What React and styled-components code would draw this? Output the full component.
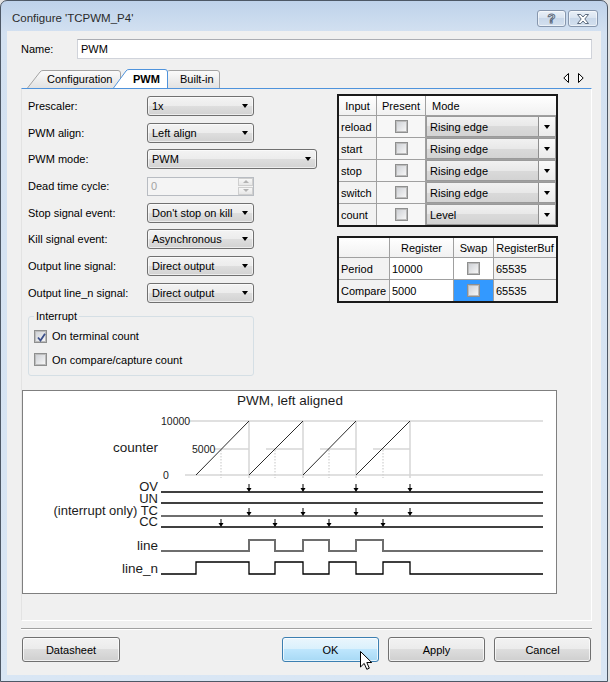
import React from 'react';
import styled, { createGlobalStyle } from 'styled-components';

const GlobalStyle = createGlobalStyle`
  html, body { margin: 0; padding: 0; background: #e2e2e2; }
  body { font-family: "Liberation Sans", Arial, sans-serif; font-size: 11px; color: #000; }
  * { box-sizing: border-box; }
`;

const Window = styled.div`
  width: 608px;
  height: 682px;
  border: 1px solid #4d5866;
  border-radius: 7px 7px 0 0;
  background: linear-gradient(#bed2ea, #d3e1f1 32px, #d9e6f4);
  display: flex;
  flex-direction: column;
`;

const TitleBar = styled.div`
  height: 30px;
  display: flex;
  align-items: flex-start;
  padding: 9px 9px 0 11px;
`;

const Title = styled.div`
  font-size: 11.5px;
  line-height: 17px;
  color: #2b2b2b;
`;

const CapButtons = styled.div`
  margin-left: auto;
  display: flex;
  gap: 2px;
`;

const CapButton = styled.div`
  width: ${p => p.$w}px;
  height: 17px;
  border: 1px solid #8797ae;
  border-radius: 3px;
  background: linear-gradient(#e9f0f8, #d8e3f0 50%, #c9d8ea 50%, #d4e0ee);
  box-shadow: inset 0 0 0 1px rgba(255, 255, 255, 0.55);
  display: flex;
  align-items: center;
  justify-content: center;
`;

const HelpGlyph = styled.span`
  font: bold 13px "Liberation Sans", Arial, sans-serif;
  color: #fff;
  -webkit-text-stroke: 1px #5d6b7e;
  line-height: 13px;
`;

const Client = styled.div`
  flex: 1;
  margin: 0 6px 6px;
  background: #f0f0f0;
  padding: 8px 9px 0 14px;
  display: flex;
  flex-direction: column;
`;

const NameRow = styled.div`
  display: flex;
  align-items: center;
  height: 20px;
`;

const NameLabel = styled.div`
  width: 56px;
`;

const TextInput = styled.div`
  flex: 1;
  height: 20px;
  background: #fff;
  border: 1px solid #d0d3da;
  border-top-color: #abadb3;
  padding-left: 3px;
  display: flex;
  align-items: center;
`;

const TabStrip = styled.div`
  margin-top: 10px;
  height: 19px;
  display: flex;
  align-items: flex-end;
  padding-left: 6px;
`;

const TabItem = styled.div`
  position: relative;
  z-index: ${p => p.$z};
  width: ${p => p.$w}px;
  height: ${p => (p.$active ? 19 : 18)}px;
  margin-left: ${p => p.$ml || 0}px;
  padding-left: ${p => p.$pl}px;
  display: flex;
  align-items: center;
  font-weight: ${p => (p.$active ? 700 : 400)};
  svg {
    position: absolute;
    left: 0;
    top: 0;
    z-index: -1;
  }
`;

const TabScroll = styled.div`
  margin-left: auto;
  margin-right: 8px;
  align-self: center;
  margin-bottom: 2px;
  display: flex;
  gap: 9px;
`;

const Panel = styled.div`
  height: 533px;
  border: 1px solid #fff;
  border-top-color: #4f93dc;
  border-left-color: #e3e3e3;
  overflow: hidden;
`;

const TopSection = styled.div`
  display: grid;
  grid-template-columns: 309px 221px;
  padding-left: 6px;
`;

const LeftColumn = styled.div`
  display: flex;
  flex-direction: column;
`;

const Form = styled.div`
  margin-top: 7px;
  display: grid;
  grid-template-columns: 119px auto;
  grid-auto-rows: 20px;
  row-gap: 6.7px;
  align-items: center;
`;

const Select = styled.div`
  width: ${p => p.$w || 107}px;
  height: 20px;
  border: 1px solid #707070;
  border-radius: 3px;
  background: linear-gradient(#f3f3f3, #ececec 50%, #dedede 50%, #d2d2d2);
  box-shadow: inset 0 0 0 1px rgba(255, 255, 255, 0.6);
  display: flex;
  align-items: center;
  padding-left: 4px;
`;

const Caret = styled.span`
  margin-left: ${p => (p.$bare ? 0 : 'auto')};
  margin-right: ${p => (p.$bare ? 0 : 5)}px;
  width: 0;
  height: 0;
  border-left: 3.5px solid transparent;
  border-right: 3.5px solid transparent;
  border-top: 4px solid #000;
`;

const Spin = styled.div`
  width: 107px;
  height: 19px;
  border: 1px solid #b8bcc2;
  background: #f4f4f4;
  display: flex;
  align-items: center;
  padding-left: 3px;
  color: #a3a3a3;
`;

const SpinButtons = styled.div`
  margin-left: auto;
  width: 15px;
  height: 17px;
  display: flex;
  flex-direction: column;
  gap: 1px;
`;

const SpinPart = styled.div`
  flex: 1;
  border: 1px solid #cfcfcf;
  background: linear-gradient(#f7f7f7, #e7e7e7);
  display: flex;
  align-items: center;
  justify-content: center;
  &::after {
    content: '';
    border-left: 3px solid transparent;
    border-right: 3px solid transparent;
    ${p => (p.$up ? 'border-bottom: 3px solid #b3b3b3;' : 'border-top: 3px solid #b3b3b3;')}
  }
`;

const Group = styled.fieldset`
  margin: 7px 0 0;
  width: 226px;
  border: 1px solid #d5dfe5;
  border-radius: 3px;
  padding: 6px 6px 8px 5px;
  display: flex;
  flex-direction: column;
  gap: 8.5px;
  legend {
    padding: 0 2px;
    line-height: 13px;
    margin-left: 0;
  }
`;

const CheckRow = styled.label`
  display: flex;
  align-items: center;
  gap: 5px;
  height: 15px;
`;

const Box = styled.span`
  width: 13px;
  height: 13px;
  flex: none;
  border: 1px solid #8e8f8f;
  background: #fff;
  display: inline-flex;
  align-items: center;
  justify-content: center;
  position: relative;
  &::before {
    content: '';
    width: 9px;
    height: 9px;
    border: 1px solid #bcbcbc;
    background: linear-gradient(135deg, #cfd2d7, #f6f6f6);
  }
  svg {
    position: absolute;
    left: 1px;
    top: 1px;
  }
`;

const RightColumn = styled.div`
  margin-top: 5px;
  display: flex;
  flex-direction: column;
  gap: 9px;
`;

const Grid = styled.div`
  width: 221px;
  display: grid;
  grid-template-columns: ${p => p.$cols};
  grid-template-rows: 19px;
  grid-auto-rows: 21px;
  gap: 1px;
  background: #a0a0a0;
  border: 2px solid #1a1a1a;
`;

const HeadCell = styled.div`
  background: linear-gradient(#ffffff, #f1f1f1);
  display: flex;
  align-items: center;
  justify-content: ${p => (p.$left ? 'flex-start' : 'center')};
  padding-left: ${p => (p.$left ? 6 : 0)}px;
  white-space: nowrap;
  overflow: hidden;
`;

const Cell = styled.div`
  background: ${p => p.$bg || '#fff'};
  display: flex;
  align-items: center;
  justify-content: ${p => (p.$center ? 'center' : 'flex-start')};
  padding-left: ${p => (p.$center ? 0 : 2)}px;
  white-space: nowrap;
  overflow: hidden;
`;

const ModeCell = styled.div`
  background: #fff;
  display: flex;
  border: 1px solid #9a9a9a;
`;

const ModeText = styled.div`
  flex: 1;
  display: flex;
  align-items: center;
  padding-left: 3px;
  background: linear-gradient(#f1f1f1, #e8e8e8 50%, #dadada 50%, #d3d3d3);
`;

const ModeDrop = styled.div`
  width: 17px;
  border-left: 1px solid #8e8e8e;
  background: linear-gradient(#fafafa, #ebebeb);
  display: flex;
  align-items: center;
  justify-content: center;
`;

const ChartBox = styled.div`
  margin-top: 14px;
  width: 535px;
  height: 204px;
  border: 1px solid #7f7f7f;
  background: #fff;
  svg {
    display: block;
  }
  text {
    font-family: "Liberation Sans", Arial, sans-serif;
    fill: #1b1b1b;
  }
`;

const Separator = styled.div`
  margin-top: 7px;
  border-top: 1px solid #a0a0a0;
  border-bottom: 1px solid #fff;
`;

const ButtonRow = styled.div`
  margin-top: 7px;
  display: flex;
  gap: 9px;
  padding: 0 1px;
`;

const Button = styled.div`
  position: relative;
  width: ${p => p.$w || 97}px;
  height: 25px;
  margin-left: ${p => (p.$push ? 'auto' : '0')};
  border: 1px solid ${p => (p.$hot ? '#3c7fb1' : '#707070')};
  border-radius: 3px;
  background: ${p =>
    p.$hot
      ? 'linear-gradient(#eaf6fd, #d9f0fc 50%, #bee6fd 50%, #a7d9f5)'
      : 'linear-gradient(#f2f2f2, #ebebeb 50%, #dddddd 50%, #cfcfcf)'};
  box-shadow: inset 0 0 0 1px rgba(255, 255, 255, 0.7);
  display: flex;
  align-items: center;
  justify-content: center;
`;

const Cursor = styled.svg`
  position: absolute;
  left: 77px;
  top: 13px;
`;

const TabShape = ({ w, h, active, id }) => (
  <svg width={w} height={h}>
    <defs>
      <linearGradient id={id} x1="0" y1="0" x2="0" y2="1">
        <stop offset="0" stopColor={active ? '#ffffff' : '#fbfbfb'} />
        <stop offset="1" stopColor={active ? '#ffffff' : '#e2e2e2'} />
      </linearGradient>
    </defs>
    <path
      d={`M0.5 ${h} L13 2 Q14 0.5 16 0.5 H${w - 3} Q${w - 0.5} 0.5 ${w - 0.5} 3 V${h}`}
      fill={`url(#${id})`}
      stroke={active ? '#4f93dc' : '#a3a3a3'}
    />
  </svg>
);

const Tab = ({ label, w, pl, ml, z, active, id }) => {
  const h = active ? 19 : 18;
  return (
    <TabItem $w={w} $pl={pl} $ml={ml} $z={z} $active={active}>
      <TabShape w={w} h={h} active={active} id={id} />
      {label}
    </TabItem>
  );
};

const CheckBox = ({ checked }) => (
  <Box>
    {checked && (
      <svg width="11" height="11" viewBox="0 0 11 11">
        <path d="M2 5.5 L4.5 8.5 L9 1.8" fill="none" stroke="#3b4f8a" strokeWidth="1.8" />
      </svg>
    )}
  </Box>
);

const formRows = [
  ['Prescaler:', '1x'],
  ['PWM align:', 'Left align'],
  ['PWM mode:', 'PWM', 170],
  ['Dead time cycle:', null],
  ['Stop signal event:', "Don't stop on kill"],
  ['Kill signal event:', 'Asynchronous'],
  ['Output line signal:', 'Direct output'],
  ['Output line_n signal:', 'Direct output'],
];

const inputs = [
  ['reload', 'Rising edge'],
  ['start', 'Rising edge'],
  ['stop', 'Rising edge'],
  ['switch', 'Rising edge'],
  ['count', 'Level'],
];

const Chart = () => {
  const P = [249, 303, 356, 410];
  const C = [221, 275, 329, 383];
  const S = [196, 249, 303, 356];
  const M = [214, 266, 320, 373];
  const arrow = (x, y, k) => (
    <g key={k}>
      <line x1={x} y1={y - 8} x2={x} y2={y - 3} stroke="#000" strokeWidth="1" />
      <path d={`M${x - 2.5} ${y - 4}H${x + 2.5}L${x} ${y}Z`} fill="#000" />
    </g>
  );
  return (
    <svg width="533" height="202" viewBox="23 392 533 202">
      <text x="290" y="406" fontSize="13.5" textAnchor="middle">PWM, left aligned</text>
      <g stroke="#d6d6d6" strokeWidth="1.5" fill="none">
        <line x1="189" y1="422" x2="543" y2="422" />
        <line x1="185" y1="476" x2="543" y2="476" />
        {M.map((m, i) => <line key={i} x1={m} y1="450" x2={P[i]} y2="450" />)}
        {P.map((p, i) => <line key={i} x1={p} y1="422" x2={p} y2="479" />)}
      </g>
      <g stroke="#cfcfcf" strokeWidth="1.2" strokeDasharray="1.5 1.5">
        {C.map((c, i) => <line key={i} x1={c} y1="451" x2={c} y2="479" />)}
      </g>
      <g stroke="#2a2a2a" strokeWidth="1">
        {S.map((s, i) => <line key={i} x1={s} y1="476" x2={P[i]} y2="422" />)}
      </g>
      <text x="161" y="426" fontSize="10.5">10000</text>
      <text x="192" y="454" fontSize="10.5">5000</text>
      <text x="163" y="480" fontSize="10.5">0</text>
      <text x="158" y="453" fontSize="13.5" textAnchor="end">counter</text>

      <g fontSize="13" textAnchor="end">
        <text x="158" y="492">OV</text>
        <text x="158" y="503.5">UN</text>
        <text x="158" y="516">(interrupt only) TC</text>
        <text x="158" y="527">CC</text>
      </g>
      <g fontSize="13.5" textAnchor="end">
        <text x="158" y="551">line</text>
        <text x="158" y="574">line_n</text>
      </g>
      <g strokeWidth="1.3" fill="none">
        <line x1="161" y1="493" x2="543" y2="493" stroke="#000" />
        <line x1="161" y1="504" x2="543" y2="504" stroke="#000" />
        <line x1="161" y1="517" x2="543" y2="517" stroke="#6e6e6e" strokeWidth="2" />
        <line x1="161" y1="528" x2="543" y2="528" stroke="#000" />
        <path d="M161 552H249V541H275V552H303V541H329V552H356V541H383V552H543" stroke="#6e6e6e" strokeWidth="2" />
        <path d="M161 575H196V563H249V575H275V563H303V575H329V563H356V575H383V563H410V575H543" stroke="#000" />
      </g>
      {P.map((p, i) => arrow(p, 493, 'o' + i))}
      {P.map((p, i) => arrow(p, 517, 't' + i))}
      {C.map((c, i) => arrow(c, 528, 'c' + i))}
    </svg>
  );
};

export default function App() {
  return (
    <>
      <GlobalStyle />
      <Window>
        <TitleBar>
          <Title>Configure 'TCPWM_P4'</Title>
          <CapButtons>
            <CapButton $w={29}>
              <HelpGlyph>?</HelpGlyph>
            </CapButton>
            <CapButton $w={30}>
              <svg width="12" height="10" viewBox="0 0 12 10">
                <path
                  d="M0.5 0.5H3.8L6 3L8.2 0.5H11.5L7.8 5L11.5 9.5H8.2L6 7L3.8 9.5H0.5L4.2 5Z"
                  fill="#fff"
                  stroke="#5d6b7e"
                />
              </svg>
            </CapButton>
          </CapButtons>
        </TitleBar>
        <Client>
          <NameRow>
            <NameLabel>Name:</NameLabel>
            <TextInput>PWM</TextInput>
          </NameRow>
          <TabStrip>
            <Tab label="Configuration" w={94} pl={20} z={1} id="t1" />
            <Tab label="PWM" w={55} pl={20} ml={-8} z={3} active id="t2" />
            <Tab label="Built-in" w={66} pl={26} ml={-14} z={0} id="t3" />
            <TabScroll>
              <svg width="6" height="10">
                <path d="M5.5 0.5V9.5L0.8 5Z" fill="#fff" stroke="#000" />
              </svg>
              <svg width="6" height="10">
                <path d="M0.5 0.5V9.5L5.2 5Z" fill="#fff" stroke="#000" />
              </svg>
            </TabScroll>
          </TabStrip>
          <Panel>
            <TopSection>
              <LeftColumn>
                <Form>
                  {formRows.map(([label, value, w]) => (
                    <React.Fragment key={label}>
                      <div>{label}</div>
                      {value === null ? (
                        <Spin>
                          0
                          <SpinButtons>
                            <SpinPart $up />
                            <SpinPart />
                          </SpinButtons>
                        </Spin>
                      ) : (
                        <Select $w={w}>
                          {value}
                          <Caret />
                        </Select>
                      )}
                    </React.Fragment>
                  ))}
                </Form>
                <Group>
                  <legend>Interrupt</legend>
                  <CheckRow>
                    <CheckBox checked />
                    On terminal count
                  </CheckRow>
                  <CheckRow>
                    <CheckBox />
                    On compare/capture count
                  </CheckRow>
                </Group>
              </LeftColumn>
              <RightColumn>
                <Grid $cols="37px 48px 130px">
                  <HeadCell>Input</HeadCell>
                  <HeadCell>Present</HeadCell>
                  <HeadCell $left>Mode</HeadCell>
                  {inputs.map(([name, mode]) => (
                    <React.Fragment key={name}>
                      <Cell $bg="#f2f2f2">{name}</Cell>
                      <Cell $bg="#f7f7f7" $center>
                        <CheckBox />
                      </Cell>
                      <ModeCell>
                        <ModeText>{mode}</ModeText>
                        <ModeDrop>
                          <Caret $bare />
                        </ModeDrop>
                      </ModeCell>
                    </React.Fragment>
                  ))}
                </Grid>
                <Grid $cols="50px 63px 39px 62px">
                  <HeadCell />
                  <HeadCell>Register</HeadCell>
                  <HeadCell>Swap</HeadCell>
                  <HeadCell>RegisterBuf</HeadCell>
                  <Cell $bg="#f2f2f2">Period</Cell>
                  <Cell>10000</Cell>
                  <Cell $center>
                    <CheckBox />
                  </Cell>
                  <Cell $bg="#f2f2f2">65535</Cell>
                  <Cell $bg="#f2f2f2">Compare</Cell>
                  <Cell>5000</Cell>
                  <Cell $center $bg="#3399ff">
                    <CheckBox />
                  </Cell>
                  <Cell $bg="#f2f2f2">65535</Cell>
                </Grid>
              </RightColumn>
            </TopSection>
            <ChartBox>
              <Chart />
            </ChartBox>
          </Panel>
          <Separator />
          <ButtonRow>
            <Button $w={98}>Datasheet</Button>
            <Button $push $hot>
              OK
              <Cursor width="13" height="20" viewBox="0 0 13 20">
                <path
                  d="M0.5 0.5V16L4.2 12.4L6.8 18.3L9.3 17.2L6.8 11.5H11.7Z"
                  fill="#fff"
                  stroke="#000"
                  strokeLinejoin="round"
                />
              </Cursor>
            </Button>
            <Button>Apply</Button>
            <Button>Cancel</Button>
          </ButtonRow>
        </Client>
      </Window>
    </>
  );
}
